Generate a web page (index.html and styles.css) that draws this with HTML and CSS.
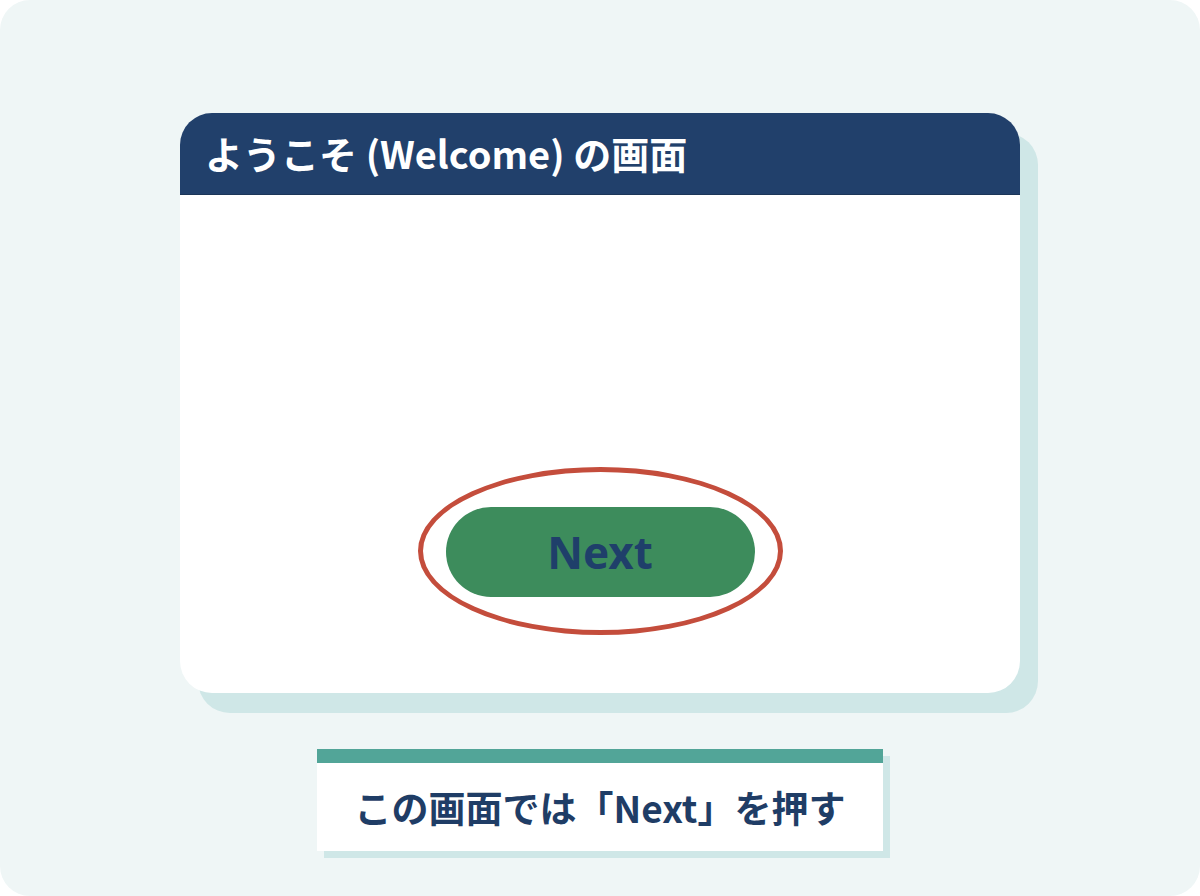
FILE: index.html
```html
<!DOCTYPE html>
<html lang="ja">
<head>
<meta charset="utf-8">
<title>ようこそ (Welcome) の画面</title>
<link rel="stylesheet" href="styles.css">
</head>
<body>
<div class="frame">
  <section class="window">
    <header class="window-title">ようこそ (Welcome) の画面</header>
    <div class="window-body">
      <div class="action">
        <button class="btn-next" type="button">Next</button>
        <span class="highlight" aria-hidden="true"></span>
      </div>
    </div>
  </section>
  <div class="caption">この画面では「Next」を押す</div>
</div>
</body>
</html>
```
FILE: styles.css
```css
html, body {
  margin: 0;
  padding: 0;
  background: #ffffff;
}

body {
  font-family: "Noto Sans CJK JP", "Noto Sans", sans-serif;
}

.frame {
  width: 1200px;
  height: 896px;
  box-sizing: border-box;
  background: #eff6f6;
  border-radius: 30px;
  display: flex;
  flex-direction: column;
  align-items: center;
  padding-top: 113px;
}

.window {
  width: 840px;
  height: 580px;
  background: #ffffff;
  border-radius: 32px;
  overflow: hidden;
  box-shadow: 18px 20px 0 #cfe7e7;
  display: flex;
  flex-direction: column;
}

.window-title {
  height: 82px;
  flex: none;
  box-sizing: border-box;
  background: #21406b;
  color: #ffffff;
  font-weight: 700;
  font-size: 38px;
  line-height: 80px;
  padding-left: 25px;
  border-bottom: 1px solid #1b3558;
}

.window-body {
  flex: 1;
  display: flex;
  flex-direction: column;
  align-items: center;
  justify-content: flex-end;
  padding-bottom: 96px;
}

.action {
  position: relative;
}

.btn-next {
  display: block;
  width: 309px;
  height: 90px;
  border: none;
  border-radius: 45px;
  background: #3d8c5c;
  color: #1f3f6a;
  font-family: "Noto Sans", "Noto Sans CJK JP", sans-serif;
  font-weight: 700;
  font-size: 44px;
  line-height: 90px;
  padding: 0;
}

/* red ring drawn around the button */
.highlight {
  position: absolute;
  left: -28px;
  top: -40px;
  width: 365px;
  height: 168px;
  box-sizing: border-box;
  border: 5px solid #c44d3c;
  border-radius: 50%;
}

.caption {
  margin-top: 56px;
  width: 566px;
  height: 102px;
  box-sizing: border-box;
  background: #ffffff;
  border-top: 14px solid #52a598;
  box-shadow: 7px 7px 0 #cfe7e7;
  color: #1f3d66;
  font-weight: 700;
  font-size: 37px;
  line-height: 88px;
  text-align: center;
}
```
